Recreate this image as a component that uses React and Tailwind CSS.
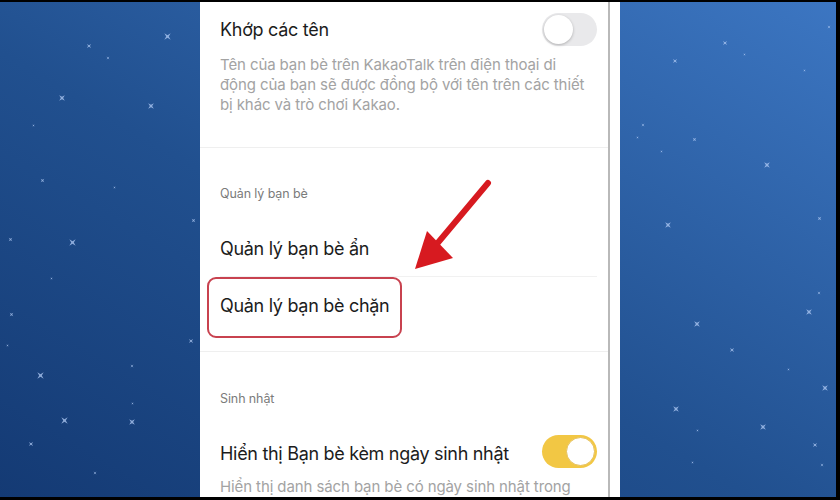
import React from "react";

// sparkles scattered over the night-blue backdrop: [x, y, size]
const stars = [
  [167, 36, 9], [89, 46, 6], [108, 58, 4], [62, 98, 8], [151, 106, 8], [33, 125, 3],
  [42, 180, 5], [114, 187, 3], [193, 220, 5], [10, 239, 5], [72, 242, 9],
  [51, 278, 3], [11, 314, 5], [191, 341, 6], [7, 345, 3], [40, 375, 9], [132, 366, 4],
  [132, 403, 3], [64, 420, 9], [132, 422, 8], [31, 444, 6], [95, 473, 4],
  [829, 27, 4], [725, 43, 6], [675, 61, 6], [744, 54, 3], [804, 70, 3], [643, 125, 4],
  [637, 137, 3], [694, 139, 5], [661, 151, 3], [767, 165, 8], [668, 225, 8], [819, 218, 5],
  [819, 293, 4], [809, 312, 8], [697, 324, 8], [732, 350, 6], [788, 369, 3], [825, 388, 8],
  [676, 409, 8], [763, 427, 8], [697, 430, 3], [815, 445, 6], [822, 465, 4], [692, 462, 3],
];

function Star({ x, y, s }) {
  return (
    <svg
      className="absolute"
      style={{ left: x - s / 2, top: y - 2 - s / 2 }}
      width={s}
      height={s}
      viewBox="0 0 10 10"
    >
      <path
        d="M5 0 L6 4 L10 5 L6 6 L5 10 L4 6 L0 5 L4 4Z"
        fill="#b4cdf7"
        opacity="0.75"
        transform="rotate(45 5 5)"
      />
    </svg>
  );
}

function Toggle({ on }) {
  return on ? (
    <div className="w-[55px] h-[33px] rounded-full bg-[#f2c744] flex items-center justify-end pr-[2px]">
      <div className="w-[29px] h-[29px] rounded-full bg-white border border-[#e6c05a]" />
    </div>
  ) : (
    <div className="w-[55px] h-[33px] rounded-full bg-[#e9e9eb] flex items-center pl-[2px]">
      <div className="w-[29px] h-[29px] rounded-full bg-white shadow-[0_1px_3px_rgba(0,0,0,0.25)]" />
    </div>
  );
}

export default function App() {
  return (
    <div
      className="w-[840px] h-[500px] bg-black pt-[2px] pb-[3px] pr-[4px] overflow-hidden"
      style={{ fontFamily: "Inter, 'Noto Sans', 'Liberation Sans', sans-serif" }}
    >
      <div className="relative h-full bg-[linear-gradient(to_top_right,#143a74,#21508f_45%,#3c76c2)]">
        {stars.map(([x, y, s], i) => (
          <Star key={i} x={x} y={y} s={s} />
        ))}

        {/* phone settings screen */}
        <div className="relative z-10 ml-[200px] w-[420px] h-full bg-white flex overflow-hidden">
          <div className="w-[408px] flex flex-col">
            <div className="mt-[11px] h-[34px] pl-[20px] pr-[11px] flex items-center justify-between">
              <span className="text-[18px] tracking-[-0.3px] text-[#1c1c1c]">Khớp các tên</span>
              <Toggle on={false} />
            </div>
            <p className="mt-[9px] pl-[20px] text-[15px] leading-[20px] tracking-[-0.1px] text-[#a3a3a3] whitespace-nowrap">
              Tên của bạn bè trên KakaoTalk trên điện thoại di
              <br />
              động của bạn sẽ được đồng bộ với tên trên các thiết
              <br />
              bị khác và trò chơi Kakao.
            </p>
            <div className="mt-[32px] h-px bg-[#efefef]" />

            <div className="mt-[38px] h-[16px] pl-[20px] flex items-center text-[12.5px] tracking-[-0.1px] text-[#7b7b7b]">
              Quản lý bạn bè
            </div>
            <div className="mt-[19px] h-[56px] pl-[20px] flex items-center text-[18px] tracking-[-0.3px] text-[#1c1c1c]">
              Quản lý bạn bè ẩn
            </div>
            <div className="ml-[20px] mr-[11px] h-px bg-[#f1f1f1]" />
            <div className="h-[59px] pl-[20px] flex items-center text-[18px] tracking-[-0.3px] text-[#1c1c1c]">
              Quản lý bạn bè chặn
            </div>
            <div className="mt-[17px] h-px bg-[#efefef]" />

            <div className="mt-[39px] h-[16px] pl-[20px] flex items-center text-[12.5px] tracking-[-0.1px] text-[#7b7b7b]">
              Sinh nhật
            </div>
            <div className="mt-[28px] h-[33px] pl-[20px] pr-[11px] flex items-center justify-between">
              <span className="text-[18px] tracking-[-0.3px] text-[#1c1c1c] pt-[4px]">Hiển thị Bạn bè kèm ngày sinh nhật</span>
              <Toggle on />
            </div>
            <p className="mt-[9px] pl-[20px] text-[15px] leading-[20px] tracking-[-0.1px] text-[#a3a3a3] whitespace-nowrap">
              Hiển thị danh sách bạn bè có ngày sinh nhật trong
            </p>
          </div>
          <div className="w-[2px] bg-[#b9b9b9]" />

          {/* highlight around the blocked-friends entry */}
          <div className="absolute left-[7px] top-[275px] w-[195px] h-[61px] rounded-[9px] border-2 border-[#c8424f]" />

          {/* pointer arrow */}
          <svg className="absolute left-0 top-0 pointer-events-none" width="420" height="495">
            <line x1="288" y1="181" x2="236" y2="243" stroke="#d71a20" strokeWidth="6" strokeLinecap="round" />
            <polygon points="215,267 227,229 253,256" fill="#d71a20" />
          </svg>
        </div>
      </div>
    </div>
  );
}
